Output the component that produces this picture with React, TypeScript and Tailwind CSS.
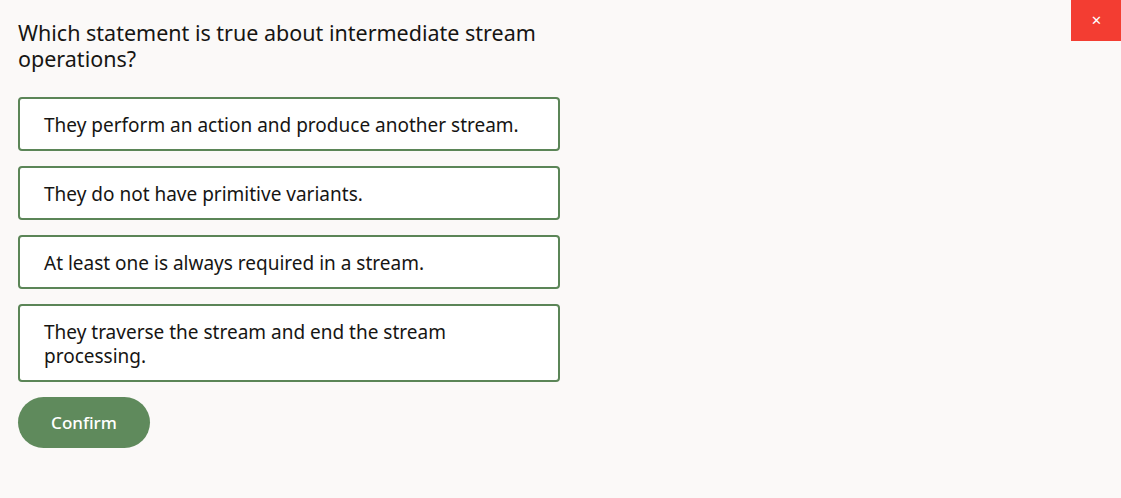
const options = [
  'They perform an action and produce another stream.',
  'They do not have primitive variants.',
  'At least one is always required in a stream.',
  'They traverse the stream and end the stream processing.',
];

export default function App() {
  return (
    <div className="relative h-[498px] w-[1121px] bg-[#fbf9f8] font-['Noto_Sans',sans-serif] text-[#161513]">
      <button className="absolute right-0 top-0 flex h-[41px] w-[50px] items-center justify-center bg-[#f33d32] text-[13px] text-white">
        ✕
      </button>
      <div className="flex w-[578px] flex-col pl-[18px] pt-[20px]">
        <h1 className="text-[21.5px] leading-[26px] font-normal">
          Which statement is true about intermediate stream operations?
        </h1>
        <div className="mt-[25px] flex w-[542px] flex-col gap-[15px]">
          {options.map((o) => (
            <div
              key={o}
              className="rounded-[4px] border-2 border-[#5b8557] bg-white pt-[14px] pb-[12px] pl-[24px] pr-[20px] text-[19px] leading-[24px]"
            >
              {o}
            </div>
          ))}
        </div>
        <button className="mt-[15px] h-[51px] w-[132px] rounded-full bg-[#5f8a5c] text-[17px] font-medium text-white">
          Confirm
        </button>
      </div>
    </div>
  );
}
